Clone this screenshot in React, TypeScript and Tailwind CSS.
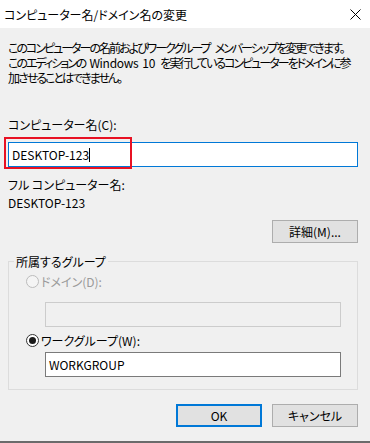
export default function App() {
  return (
    <div className="w-[370px] h-[443px] bg-[#f0f0f0] flex flex-col border-b-2 border-[#6b6b6b] text-[12px] leading-[15px] text-black [font-family:'Noto_Sans_CJK_JP',sans-serif] [font-feature-settings:'palt'] overflow-hidden">
      <div className="h-[28px] shrink-0 bg-white flex items-center justify-between pl-[4px] pr-[8px]">
        <span className="whitespace-nowrap">コンピューター名/ドメイン名の変更</span>
        <svg width="11" height="11" viewBox="0 0 11 11" className="mr-[1px]">
          <path d="M0.5 0.5 L10.5 10.5 M10.5 0.5 L0.5 10.5" stroke="#000" strokeWidth="1" fill="none" />
        </svg>
      </div>
      <div className="flex flex-col pl-[8px] pr-[12px]">
        <div className="mt-[12px] flex flex-col whitespace-nowrap tracking-[-2px]">
          <span className="h-[15px]">
            このコンピューターの名前およびワークグループ<span className="inline-block w-[5px]"></span>メンバーシップを変更できます。
          </span>
          <span className="h-[15px]">
            このエディションの<span className="inline-block w-[4px]"></span>
            <span className="tracking-[-0.3px]">Windows</span>
            <span className="inline-block w-[4px]"></span>
            <span className="tracking-[-0.3px]">10</span>
            <span className="inline-block w-[5px]"></span>を実行しているコンピューターをドメインに参
          </span>
          <span className="h-[15px]">加させることはできません。</span>
        </div>
        <div className="mt-[32px]">コンピューター名(C):</div>
        <div className="relative mt-[10px]">
          <div className="h-[25px] border border-[#0078d7] bg-white flex items-center pl-[3px]">
            <span>DESKTOP-123</span>
            <span className="w-px h-[14px] bg-black"></span>
          </div>
          <div className="absolute left-[-4px] top-[-5px] w-[128px] h-[32px] border-2 border-[#e81123]"></div>
        </div>
        <div className="mt-[10px]">フル コンピューター名:</div>
        <div className="mt-[3px]">DESKTOP-123</div>
        <div className="mt-[10px] flex justify-end">
          <button className="w-[86px] h-[23px] border border-[#adadad] bg-[#e1e1e1] flex items-center justify-center">
            詳細(M)...
          </button>
        </div>
        <fieldset className="mt-[11px] border border-[#dcdcdc] p-0 m-0 min-w-0">
          <legend className="ml-[5px] px-[2px] leading-[15px]">所属するグループ</legend>
          <div className="pl-[17px] pr-[16px] pb-[12px] flex flex-col">
            <div className="mt-[5px] h-[15px] flex items-center">
              <span className="w-[13px] h-[13px] rounded-full border border-[#bcbcbc] bg-[#f4f4f4]"></span>
              <span className="ml-[2px] text-[#9a9a9a]">ドメイン(D):</span>
            </div>
            <div className="mt-[12.5px] ml-[19px] w-[296px] h-[25px] border border-[#cccccc] bg-[#f0f0f0]"></div>
            <div className="mt-[6.5px] h-[15px] flex items-center">
              <span className="w-[13px] h-[13px] rounded-full border border-[#333333] bg-white flex items-center justify-center">
                <span className="w-[7px] h-[7px] rounded-full bg-[#1a1a1a]"></span>
              </span>
              <span className="ml-[2px]">ワークグループ(W):</span>
            </div>
            <div className="mt-[3.5px] ml-[19px] w-[296px] h-[25px] border border-[#7a7a7a] bg-white flex items-center pl-[3px]">
              WORKGROUP
            </div>
          </div>
        </fieldset>
        <div className="mt-[14px] flex justify-end gap-[10px]">
          <button className="w-[86px] h-[23px] border-2 border-[#0078d7] bg-[#e1e1e1] flex items-center justify-center">
            OK
          </button>
          <button className="w-[86px] h-[23px] border border-[#adadad] bg-[#e1e1e1] flex items-center justify-center">
            キャンセル
          </button>
        </div>
      </div>
    </div>
  );
}
